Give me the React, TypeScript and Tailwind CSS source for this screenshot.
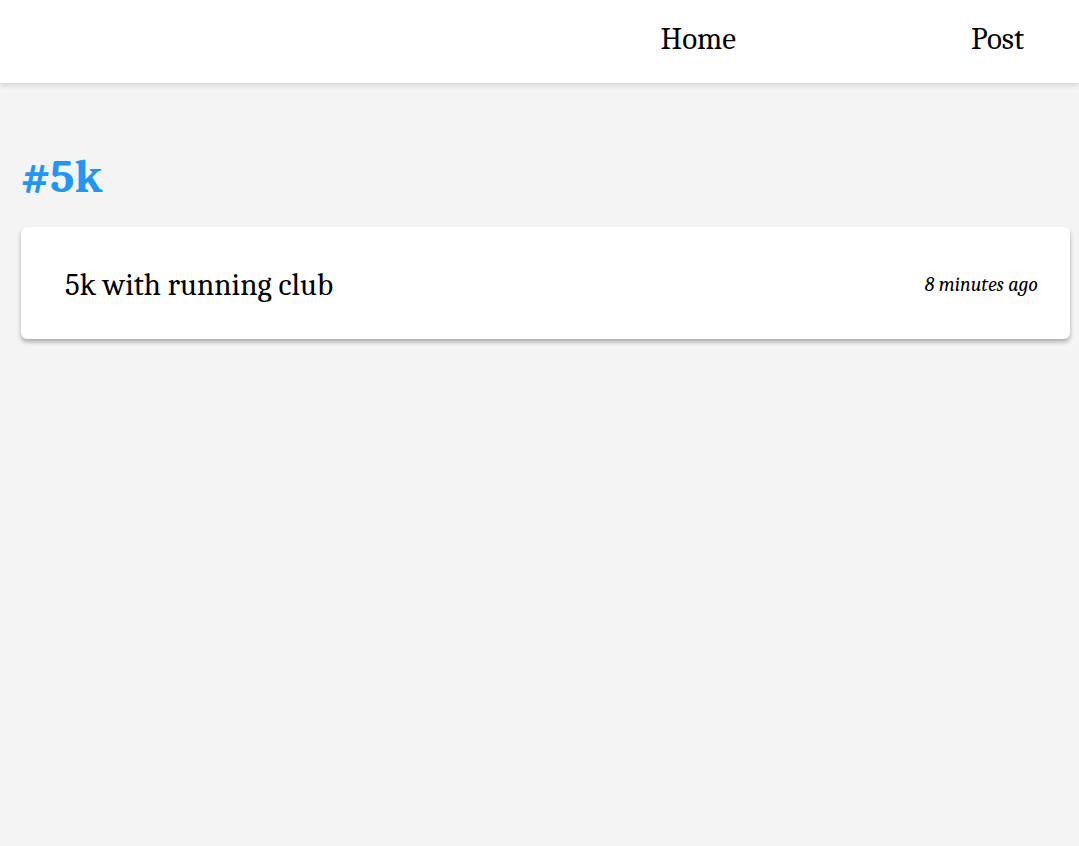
export default function App() {
  return (
    <div
      className="min-h-screen bg-[#f4f4f4]"
      style={{ fontFamily: 'Cambria, Caladea, "Liberation Serif", serif' }}
    >
      <nav className="flex h-[83px] items-center justify-end bg-white shadow-[0_2px_6px_rgba(0,0,0,0.15)]">
        <a className="mr-[235px] pb-[4px] text-[31px] text-black">Home</a>
        <a className="mr-[55px] pb-[4px] text-[31px] text-black">Post</a>
      </nav>

      <main className="pl-[21px] pr-[9px] pt-[64px]">
        <h1 className="text-[47px] font-bold leading-[60px] text-[#2196f3]">#5k</h1>

        <div className="mt-[20px] flex h-[112px] items-center justify-between rounded-[6px] bg-white pl-[44px] pr-[32px] pt-[4px] shadow-[0_3px_4px_rgba(0,0,0,0.3)]">
          <span className="text-[31px] text-black">5k with running club</span>
          <span className="text-[20px] italic text-black">8 minutes ago</span>
        </div>
      </main>
    </div>
  );
}
